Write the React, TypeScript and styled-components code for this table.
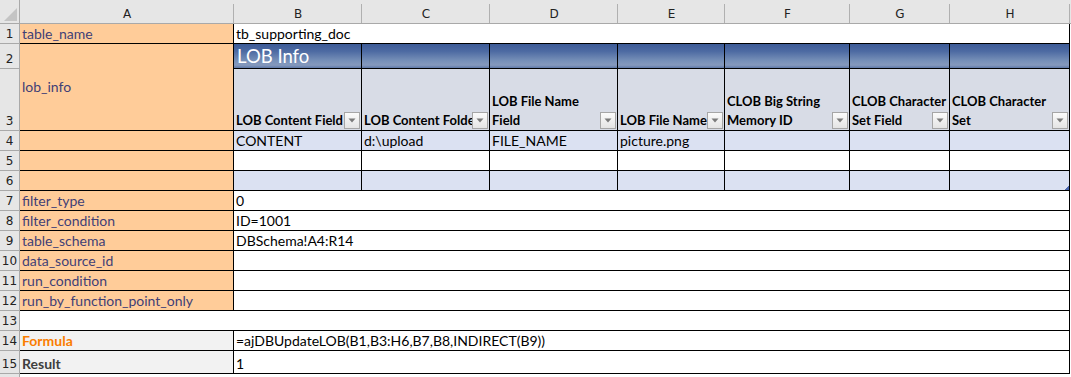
import styled, { createGlobalStyle } from "styled-components";

const GlobalStyle = createGlobalStyle`
  html, body {
    margin: 0;
    padding: 0;
    background: #ffffff;
  }
  body {
    font-family: "Lato", "Liberation Sans", sans-serif;
    font-size: 14px;
    color: #000000;
  }
`;

const COLS = ["A", "B", "C", "D", "E", "F", "G", "H"];

const SSheet = styled.div`
  display: grid;
  grid-template-columns: 20px 214px 128px 128px 128px 107px 125px 100px 120px 2px;
  grid-template-rows: 24px 20px 25px 62px repeat(11, 20px) 23px 4px;
  width: 1071px;
  height: 377px;
  overflow: hidden;
  background: #ffffff;
`;

const SCorner = styled.div`
  position: relative;
  background: #e6e6e6;
  border-right: 1px solid #a9a9a9;
  border-bottom: 1px solid #a9a9a9;
  box-sizing: border-box;

  svg {
    position: absolute;
    right: 2px;
    bottom: 2px;
  }
`;

const SColHead = styled.div`
  display: flex;
  align-items: center;
  justify-content: center;
  padding-top: 4px;
  box-sizing: border-box;
  background:
    linear-gradient(#b0b0b0, #b0b0b0) right 0 bottom 0 / 1px calc(100% - 4px)
      no-repeat,
    #e6e6e6;
  border-bottom: 1px solid #a9a9a9;
  font-family: "DejaVu Sans", sans-serif;
  font-size: 12px;
  color: #222222;
`;

const SColFiller = styled.div`
  background: #e6e6e6;
  border-bottom: 1px solid #a9a9a9;
  box-sizing: border-box;
`;

const SRowHead = styled.div<{ $row: number }>`
  grid-row: ${(p) => p.$row + 1};
  grid-column: 1;
  display: flex;
  align-items: flex-end;
  justify-content: center;
  padding-bottom: 1px;
  box-sizing: border-box;
  background: #e6e6e6;
  border-right: 1px solid #a9a9a9;
  border-bottom: 1px solid #a9a9a9;
  font-family: "DejaVu Sans", sans-serif;
  font-size: 12px;
  color: #222222;
  line-height: 16px;
`;

const SRowHeadFill = styled.div`
  grid-row: 17;
  grid-column: 1;
  background: #e6e6e6;
  border-right: 1px solid #a9a9a9;
  box-sizing: border-box;
`;

type Tone = "input" | "white" | "band" | "calc" | "output";

const TONES: Record<Tone, string> = {
  input: "#ffcc99",
  white: "#ffffff",
  band: "#dbe1f2",
  calc: "#f2f2f2",
  output: "#f2f2f2",
};

const INKS: Record<Tone, string> = {
  input: "#3f3f76",
  white: "#000000",
  band: "#000000",
  calc: "#fa7d00",
  output: "#3f3f3f",
};

const SCell = styled.div<{
  $row: number;
  $col: number;
  $span?: number;
  $rowSpan?: number;
  $tone: Tone;
  $center?: boolean;
}>`
  position: relative;
  grid-row: ${(p) => p.$row + 1} / span ${(p) => p.$rowSpan ?? 1};
  grid-column: ${(p) => p.$col + 1} / span ${(p) => p.$span ?? 1};
  display: flex;
  align-items: ${(p) => (p.$center ? "center" : "flex-end")};
  padding: 0 2px 0 2px;
  box-sizing: border-box;
  overflow: hidden;
  white-space: nowrap;
  background: ${(p) => TONES[p.$tone]};
  border-right: 1px solid #000000;
  border-bottom: 1px solid #000000;
  line-height: 18px;
  color: ${(p) => INKS[p.$tone]};
  font-weight: ${(p) => (p.$tone === "calc" || p.$tone === "output" ? 700 : 400)};
`;

const SBanner = styled.div<{ $col: number }>`
  grid-row: 3;
  grid-column: ${(p) => p.$col + 1};
  display: flex;
  align-items: center;
  padding: 0 3px;
  box-sizing: border-box;
  background: linear-gradient(
    to bottom,
    #3d5b97 0%,
    #4d6aa2 30%,
    #7790b8 70%,
    #8599bd 88%,
    #5f79a8 100%
  );
  border-right: 1px solid #000000;
  border-bottom: 1px solid #000000;
  color: #ffffff;
  font-size: 18.5px;
  white-space: nowrap;
`;

const SHeader = styled.div<{ $col: number }>`
  position: relative;
  grid-row: 4;
  grid-column: ${(p) => p.$col + 1};
  display: flex;
  flex-direction: column;
  justify-content: flex-end;
  padding: 0 2px 0 2px;
  box-sizing: border-box;
  overflow: hidden;
  background: #d8dce6;
  border-right: 1px solid #000000;
  border-bottom: 1px solid #000000;
  font-weight: 700;
  font-size: 13px;
  line-height: 19px;
`;

const SHeaderLine = styled.span`
  white-space: nowrap;
`;

const SFilter = styled.div`
  position: absolute;
  right: 1px;
  bottom: 1px;
  width: 16px;
  height: 17px;
  box-sizing: border-box;
  display: flex;
  align-items: center;
  justify-content: center;
  border: 1px solid #a6a6a6;
  background: linear-gradient(to bottom, #fbfbfb, #e4e4e4);
`;

const SHandle = styled.div`
  position: absolute;
  right: 0;
  bottom: 0;
  width: 4px;
  height: 4px;
  background: linear-gradient(135deg, transparent 50%, #4a66ad 50%);
`;

const FilterButton = () => (
  <SFilter>
    <svg width="8" height="5" viewBox="0 0 8 5">
      <path d="M0.5 0.5 L7.5 0.5 L4 4.5 Z" fill="#7b7b7b" />
    </svg>
  </SFilter>
);

const headers: { col: number; lines: string[] }[] = [
  { col: 2, lines: ["LOB Content Field"] },
  { col: 3, lines: ["LOB Content Folder"] },
  { col: 4, lines: ["LOB File Name", "Field"] },
  { col: 5, lines: ["LOB File Name"] },
  { col: 6, lines: ["CLOB Big String", "Memory ID"] },
  { col: 7, lines: ["CLOB Character", "Set Field"] },
  { col: 8, lines: ["CLOB Character", "Set"] },
];

const row4 = ["CONTENT", "d:\\upload", "FILE_NAME", "picture.png", "", "", ""];

const params: { row: number; name: string; value: string }[] = [
  { row: 7, name: "filter_type", value: "0" },
  { row: 8, name: "filter_condition", value: "ID=1001" },
  { row: 9, name: "table_schema", value: "DBSchema!A4:R14" },
  { row: 10, name: "data_source_id", value: "" },
  { row: 11, name: "run_condition", value: "" },
  { row: 12, name: "run_by_function_point_only", value: "" },
];

function App() {
  return (
    <>
      <GlobalStyle />
      <SSheet>
        <SCorner>
          <svg width="13" height="13" viewBox="0 0 13 13">
            <path d="M13 0 L13 13 L0 13 Z" fill="#c4c4c4" />
          </svg>
        </SCorner>
        {COLS.map((c) => (
          <SColHead key={c}>{c}</SColHead>
        ))}
        <SColFiller />

        {Array.from({ length: 15 }, (_, i) => (
          <SRowHead key={i} $row={i + 1}>
            {i + 1}
          </SRowHead>
        ))}
        <SRowHeadFill />

        <SCell $row={1} $col={1} $tone="input">table_name</SCell>
        <SCell $row={1} $col={2} $span={7} $tone="white">tb_supporting_doc</SCell>

        <SCell $row={2} $col={1} $rowSpan={2} $tone="input" $center>
          lob_info
        </SCell>
        <SBanner $col={2}>LOB Info</SBanner>
        {[3, 4, 5, 6, 7, 8].map((c) => (
          <SBanner key={c} $col={c} />
        ))}

        {headers.map((h) => (
          <SHeader key={h.col} $col={h.col}>
            {h.lines.map((l) => (
              <SHeaderLine key={l}>{l}</SHeaderLine>
            ))}
            <FilterButton />
          </SHeader>
        ))}

        {[4, 5, 6].map((r) => (
          <SCell key={`a${r}`} $row={r} $col={1} $tone="input" />
        ))}
        {row4.map((v, i) => (
          <SCell key={`r4${i}`} $row={4} $col={i + 2} $tone="band">
            {v}
          </SCell>
        ))}
        {row4.map((_, i) => (
          <SCell key={`r5${i}`} $row={5} $col={i + 2} $tone="white" />
        ))}
        {row4.map((_, i) => (
          <SCell key={`r6${i}`} $row={6} $col={i + 2} $tone="band">
            {i === 6 ? <SHandle /> : null}
          </SCell>
        ))}

        {params.map((p) => (
          <SCell key={`n${p.row}`} $row={p.row} $col={1} $tone="input">
            {p.name}
          </SCell>
        ))}
        {params.map((p) => (
          <SCell key={`v${p.row}`} $row={p.row} $col={2} $span={7} $tone="white">
            {p.value}
          </SCell>
        ))}

        <SCell $row={13} $col={1} $span={8} $tone="white" />

        <SCell $row={14} $col={1} $tone="calc">Formula</SCell>
        <SCell $row={14} $col={2} $span={7} $tone="white">
          =ajDBUpdateLOB(B1,B3:H6,B7,B8,INDIRECT(B9))
        </SCell>
        <SCell $row={15} $col={1} $tone="output">Result</SCell>
        <SCell $row={15} $col={2} $span={7} $tone="white">1</SCell>
      </SSheet>
    </>
  );
}

export default App;
